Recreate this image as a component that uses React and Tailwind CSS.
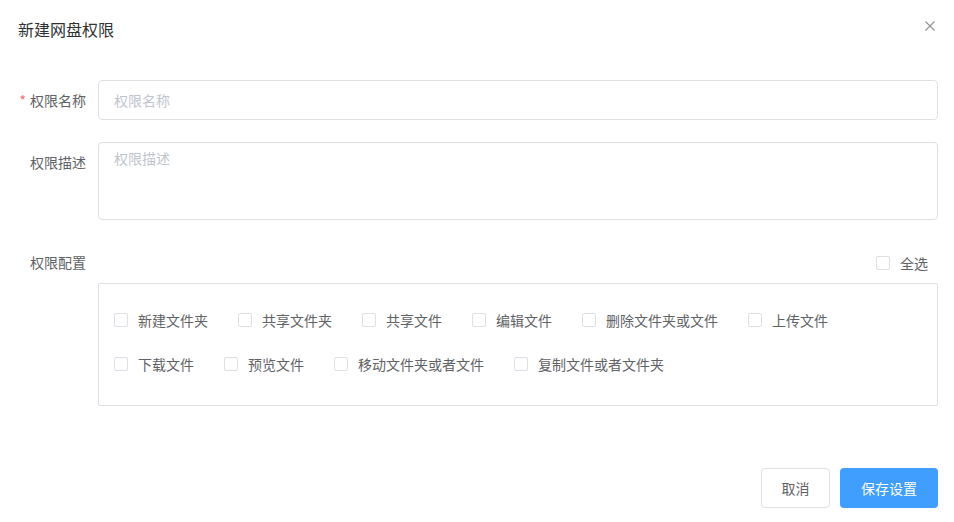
import React from "react";

const font = { fontFamily: '"Noto Sans CJK SC", "Noto Sans", sans-serif' };

function Box({ className = "" }) {
  return (
    <span
      className={
        "inline-block w-[14px] h-[14px] border border-[#dcdfe6] rounded-[2px] bg-white shrink-0 " +
        className
      }
    />
  );
}

function Check({ label, last }) {
  return (
    <label className={"flex items-center h-[44px] " + (last ? "" : "mr-[30px]")}>
      <Box />
      <span className="pl-[10px] text-[14px] leading-[20px] text-[#606266] -mt-[1px]">{label}</span>
    </label>
  );
}

export default function App() {
  const row1 = ["新建文件夹", "共享文件夹", "共享文件", "编辑文件", "删除文件夹或文件", "上传文件"];
  const row2 = ["下载文件", "预览文件", "移动文件夹或者文件", "复制文件或者文件夹"];
  return (
    <div className="w-[954px] h-[522px] bg-white flex flex-col" style={font}>
      <div className="flex justify-between items-start pl-[18px] pr-[18px] pt-[17px]">
        <div className="text-[16px] leading-[24px] text-[#303133]">新建网盘权限</div>
        <svg width="12" height="12" viewBox="0 0 12 12" className="mt-[3px]">
          <path d="M1.5 1.5L10.5 10.5M10.5 1.5L1.5 10.5" stroke="#909399" strokeWidth="1.2" />
        </svg>
      </div>

      <div className="pl-[18px] pr-[16px] pt-[39px]">
        <div className="flex mb-[22px]">
          <div className="w-[80px] pr-[12px] text-right text-[14px] leading-[40px] text-[#606266]">
            <span className="text-[#f56c6c] mr-[4px]">*</span>权限名称
          </div>
          <div className="flex-1 h-[40px] border border-[#dcdfe6] rounded-[4px] px-[15px] flex items-center text-[14px] text-[#c0c4cc]">
            权限名称
          </div>
        </div>

        <div className="flex mb-[22px]">
          <div className="w-[80px] pr-[12px] text-right text-[14px] leading-[40px] text-[#606266]">
            权限描述
          </div>
          <div className="flex-1 h-[78px] border border-[#dcdfe6] rounded-[4px] px-[15px] pt-[5px] text-[14px] leading-[21px] text-[#c0c4cc]">
            权限描述
          </div>
        </div>

        <div className="flex">
          <div className="w-[80px] pr-[12px] text-right text-[14px] leading-[40px] text-[#606266]">
            权限配置
          </div>
          <div className="flex-1 flex flex-col">
            <div className="h-[41px] flex items-center justify-end pr-[10px]">
              <Box />
              <span className="pl-[10px] text-[14px] leading-[20px] text-[#606266]">全选</span>
            </div>
            <div className="border border-[#dcdfe6] rounded-[2px] h-[123px] pl-[15px] pt-[14px]">
              <div className="flex">
                {row1.map((l, i) => (
                  <Check key={l} label={l} last={i === row1.length - 1} />
                ))}
              </div>
              <div className="flex">
                {row2.map((l, i) => (
                  <Check key={l} label={l} last={i === row2.length - 1} />
                ))}
              </div>
            </div>
          </div>
        </div>
      </div>

      <div className="flex justify-end gap-[10px] pr-[16px] mt-[62px]">
        <button className="w-[69px] h-[40px] border border-[#dcdfe6] rounded-[4px] bg-white text-[14px] text-[#606266]">
          取消
        </button>
        <button className="w-[98px] h-[40px] rounded-[4px] bg-[#409eff] text-[14px] text-white">
          保存设置
        </button>
      </div>
    </div>
  );
}
